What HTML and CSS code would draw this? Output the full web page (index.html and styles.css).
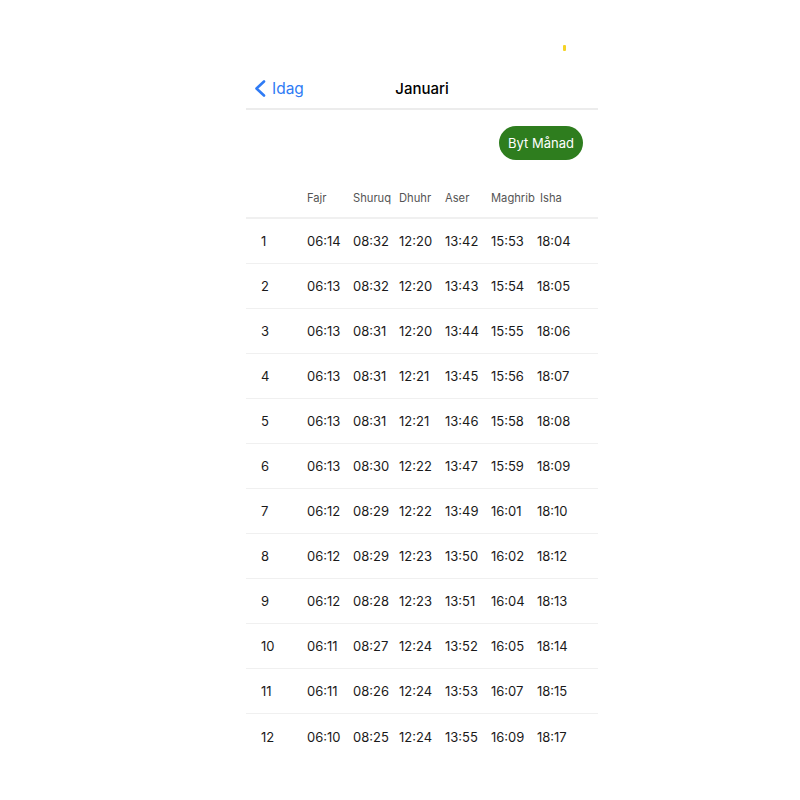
FILE: index.html
```html
<!DOCTYPE html>
<html lang="sv">

<head>
    <meta charset="UTF-8">
    <meta name="viewport" content="width=device-width, initial-scale=1.0">
    <title>Januari</title>

    <link rel="stylesheet" href="styles.css">
</head>

<body>
    <div class="screen">
        <div class="status-bar">
            <span class="indicator"></span>
        </div>

        <nav class="nav-bar">
            <a href="#" class="back">
                <svg width="12" height="17" viewBox="0 0 12 17">
                    <path d="M10 1.5 L2.5 8.5 L10 15.5" fill="none" stroke="currentColor" stroke-width="2.6" stroke-linecap="round" stroke-linejoin="round" />
                </svg>
                <span>Idag</span>
            </a>
            <h1>Januari</h1>
            <div></div>
        </nav>

        <div class="actions">
            <button class="month-button">Byt Månad</button>
        </div>

        <div class="table">
            <div class="row header">
                <span></span>
                <span>Fajr</span>
                <span>Shuruq</span>
                <span>Dhuhr</span>
                <span>Aser</span>
                <span>Maghrib</span>
                <span>Isha</span>
            </div>
            <div class="row"><span>1</span><span>06:14</span><span>08:32</span><span>12:20</span><span>13:42</span><span>15:53</span><span>18:04</span></div>
            <div class="row"><span>2</span><span>06:13</span><span>08:32</span><span>12:20</span><span>13:43</span><span>15:54</span><span>18:05</span></div>
            <div class="row"><span>3</span><span>06:13</span><span>08:31</span><span>12:20</span><span>13:44</span><span>15:55</span><span>18:06</span></div>
            <div class="row"><span>4</span><span>06:13</span><span>08:31</span><span>12:21</span><span>13:45</span><span>15:56</span><span>18:07</span></div>
            <div class="row"><span>5</span><span>06:13</span><span>08:31</span><span>12:21</span><span>13:46</span><span>15:58</span><span>18:08</span></div>
            <div class="row"><span>6</span><span>06:13</span><span>08:30</span><span>12:22</span><span>13:47</span><span>15:59</span><span>18:09</span></div>
            <div class="row"><span>7</span><span>06:12</span><span>08:29</span><span>12:22</span><span>13:49</span><span>16:01</span><span>18:10</span></div>
            <div class="row"><span>8</span><span>06:12</span><span>08:29</span><span>12:23</span><span>13:50</span><span>16:02</span><span>18:12</span></div>
            <div class="row"><span>9</span><span>06:12</span><span>08:28</span><span>12:23</span><span>13:51</span><span>16:04</span><span>18:13</span></div>
            <div class="row"><span>10</span><span>06:11</span><span>08:27</span><span>12:24</span><span>13:52</span><span>16:05</span><span>18:14</span></div>
            <div class="row"><span>11</span><span>06:11</span><span>08:26</span><span>12:24</span><span>13:53</span><span>16:07</span><span>18:15</span></div>
            <div class="row"><span>12</span><span>06:10</span><span>08:25</span><span>12:24</span><span>13:55</span><span>16:09</span><span>18:17</span></div>
        </div>
    </div>
</body>

</html>
```

FILE: styles.css
```css
* {
    margin: 0;
    padding: 0;
    box-sizing: border-box;
}

body {
    background-color: white;
    font-family: Inter, "Noto Sans", sans-serif;
    color: #1a1a1a;
    overflow: hidden;
}

.screen {
    width: 352px;
    margin-left: 246px;
}

.status-bar {
    height: 66px;
    display: flex;
    justify-content: flex-end;
    padding: 45px 32px 0 0;
}

.indicator {
    width: 3px;
    height: 6px;
    border-radius: 1px;
    background-color: #f5d327;
}

.nav-bar {
    height: 44px;
    display: grid;
    grid-template-columns: 1fr auto 1fr;
    align-items: center;
    padding-top: 2px;
    border-bottom: 2px solid #ececec;
}

.back {
    display: flex;
    align-items: center;
    gap: 6px;
    padding-left: 8px;
    color: #2f7bf5;
    text-decoration: none;
    font-size: 15.5px;
}

.nav-bar h1 {
    font-size: 15px;
    font-weight: 500;
    color: #000;
}

.actions {
    display: flex;
    justify-content: flex-end;
    padding: 16px 15px 14px 0;
}

.month-button {
    height: 34px;
    padding: 0 9px;
    border: none;
    border-radius: 17px;
    background-color: #2e7d1e;
    color: white;
    font-family: inherit;
    font-size: 13px;
    cursor: pointer;
}

.row {
    display: grid;
    grid-template-columns: 61px repeat(5, 46px) auto;
    align-items: center;
    height: 45px;
    border-bottom: 1px solid #f0f0f0;
    font-size: 13px;
}

.row:last-child {
    border-bottom: none;
}

.row span:first-child {
    padding-left: 15px;
}

.row.header {
    height: 45px;
    padding-top: 4px;
    font-size: 11.2px;
    color: #555;
    border-bottom: 2px solid #f0f0f0;
}

.row.header span:last-child {
    padding-left: 3px;
}
```
